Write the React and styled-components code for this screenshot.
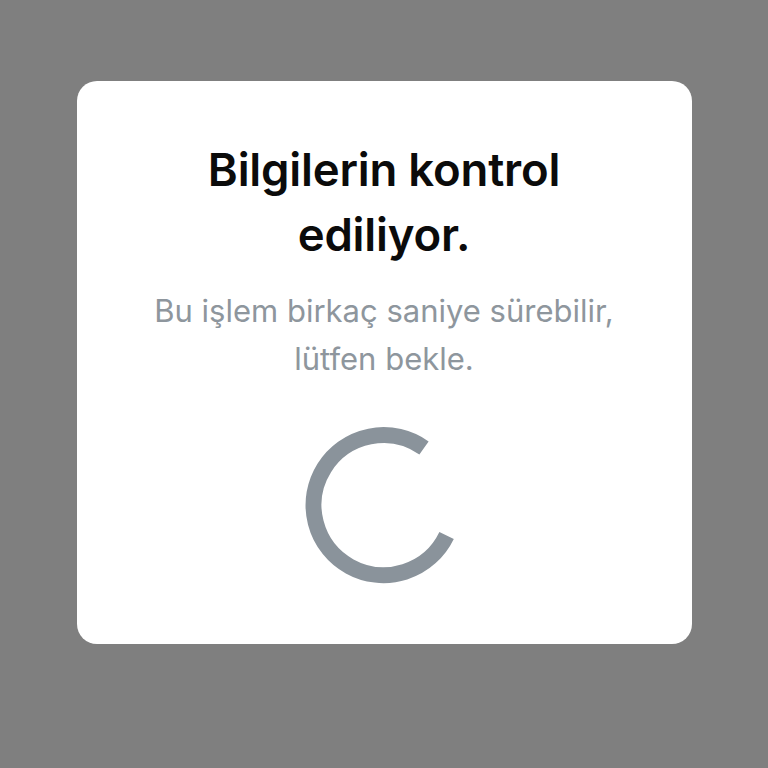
import React from 'react'
import styled, { createGlobalStyle } from 'styled-components'

const GlobalStyle = createGlobalStyle`
  html, body {
    margin: 0;
    padding: 0;
    background: #7f7f7f;
  }
  body {
    font-family: Inter, 'Noto Sans', 'Liberation Sans', sans-serif;
  }
`

const Screen = styled.div`
  min-height: 768px;
  display: flex;
  justify-content: center;
  align-items: flex-start;
  padding-top: 81px;
  box-sizing: border-box;
`

const Card = styled.div`
  width: 615px;
  height: 563px;
  box-sizing: border-box;
  background: #ffffff;
  border-radius: 20px;
  display: flex;
  flex-direction: column;
  align-items: center;
  padding-top: 56px;
`

const Title = styled.h2`
  margin: 0;
  max-width: 460px;
  text-align: center;
  font-size: 45.5px;
  line-height: 65px;
  font-weight: 600;
  color: #0b0b0b;
  letter-spacing: -0.2px;
`

const Subtitle = styled.p`
  margin: 20px 0 0;
  max-width: 480px;
  text-align: center;
  font-size: 31px;
  line-height: 48px;
  font-weight: 400;
  color: #8e969d;
`

const Spinner = styled.svg`
  display: block;
  margin-top: 42px;
  width: 160px;
  height: 160px;
`

const App = () => {
  return (
    <>
      <GlobalStyle />
      <Screen>
        <Card>
          <Title>Bilgilerin kontrol ediliyor.</Title>
          <Subtitle>Bu işlem birkaç saniye sürebilir, lütfen bekle.</Subtitle>
          <Spinner viewBox='0 0 160 160'>
            <path
              d='M142.6 110.5 A70 70 0 1 1 120 23'
              fill='none'
              stroke='#8a939b'
              strokeWidth='16'
            />
          </Spinner>
        </Card>
      </Screen>
    </>
  )
}

export default App
